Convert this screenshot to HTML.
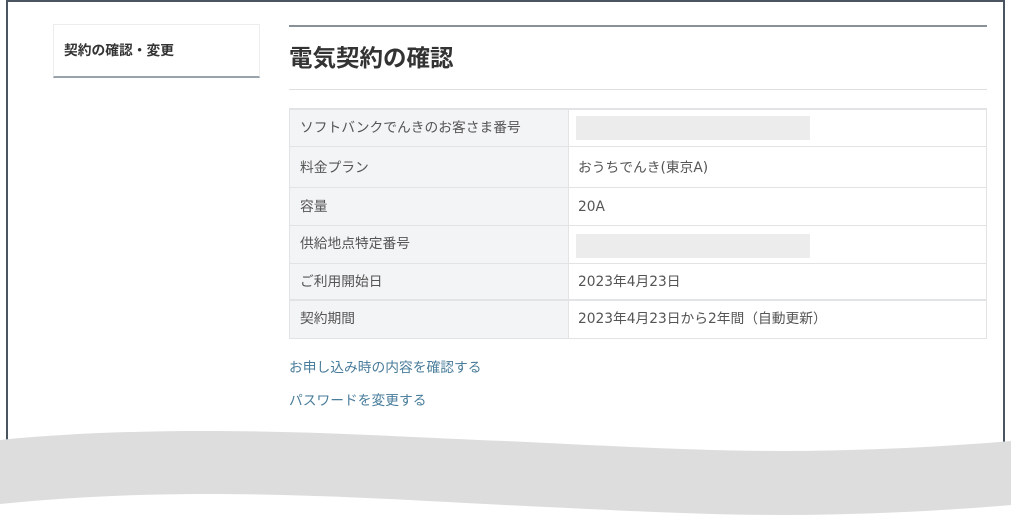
<!DOCTYPE html>
<html lang="ja">
<head>
<meta charset="utf-8">
<style>
html,body{margin:0;padding:0;background:#fff}
body{width:1011px;height:515px;position:relative;overflow:hidden;font-family:"Liberation Sans","Noto Sans CJK JP",sans-serif;color:#4a4a4a}
.a{position:absolute}
.t{position:absolute;white-space:nowrap;font-size:13.75px;line-height:20px;color:#555}
.v{font-family:"DejaVu Sans","Noto Sans CJK JP",sans-serif}
.l{position:absolute;background:#e2e3e4}
.link{color:#4a7d9b}
</style>
</head>
<body>
<div class="a" style="left:6px;top:0;width:2px;height:441px;background:#4b5560"></div>
<div class="a" style="left:1003px;top:0;width:2px;height:442px;background:#4b5560"></div>
<div class="a" style="left:6px;top:0;width:999px;height:2px;background:#4b5560"></div>

<!-- sidebar -->
<div class="a" style="left:53px;top:24px;width:205px;height:51px;border:1px solid #eceded;border-bottom:2px solid #99a3ac"></div>
<div class="t" style="left:64px;top:41px;font-weight:bold;color:#333">契約の確認・変更</div>

<!-- heading -->
<div class="a" style="left:289px;top:25px;width:698px;height:2px;background:#8b9198"></div>
<div class="t" style="left:289px;top:43px;font-size:23.5px;line-height:30px;font-weight:bold;color:#333">電気契約の確認</div>
<div class="a" style="left:289px;top:89px;width:698px;height:1px;background:#dedede"></div>

<!-- table -->
<div class="a" style="left:289px;top:109px;width:279px;height:229px;background:#f3f4f6"></div>
<div class="l" style="left:289px;top:108px;width:698px;height:2px"></div>
<div class="l" style="left:289px;top:146px;width:698px;height:1px"></div>
<div class="l" style="left:289px;top:187px;width:698px;height:1px"></div>
<div class="l" style="left:289px;top:225px;width:698px;height:1px"></div>
<div class="l" style="left:289px;top:263px;width:698px;height:1px"></div>
<div class="l" style="left:289px;top:299px;width:698px;height:2px"></div>
<div class="l" style="left:289px;top:338px;width:698px;height:1px"></div>
<div class="l" style="left:289px;top:108px;width:1px;height:231px"></div>
<div class="l" style="left:568px;top:108px;width:1px;height:231px"></div>
<div class="l" style="left:986px;top:108px;width:1px;height:231px"></div>

<div class="t" style="left:300px;top:118px">ソフトバンクでんきのお客さま番号</div>
<div class="t" style="left:300px;top:158px">料金プラン</div>
<div class="t" style="left:300px;top:197px">容量</div>
<div class="t" style="left:300px;top:234px">供給地点特定番号</div>
<div class="t" style="left:300px;top:272px">ご利用開始日</div>
<div class="t" style="left:300px;top:309px">契約期間</div>

<div class="a" style="left:576px;top:116px;width:234px;height:24px;background:#ececec"></div>
<div class="a" style="left:576px;top:234px;width:234px;height:24px;background:#ececec"></div>
<div class="t v" style="left:578px;top:158px">おうちでんき(東京A)</div>
<div class="t v" style="left:578px;top:197px">20A</div>
<div class="t v" style="left:578px;top:272px">2023年4月23日</div>
<div class="t v" style="left:578px;top:309px">2023年4月23日から2年間（自動更新）</div>

<div class="t link" style="left:289px;top:358px">お申し込み時の内容を確認する</div>
<div class="t link" style="left:289px;top:391px">パスワードを変更する</div>

<!-- torn wave -->
<svg class="a" style="left:0;top:0" width="1011" height="515" viewBox="0 0 1011 515">
<path fill="#dddddd" d="M0 440 C70 433 140 431 205 431 C320 431 420 438 505 441 C610 446 700 451 780 451 C860 451 940 447 1011 441 L1011 505 C940 511 860 515 780 515 C700 515 610 510 505 505 C420 501 320 494 205 494 C140 494 70 497 0 504 Z"/>
</svg>
</body>
</html>
